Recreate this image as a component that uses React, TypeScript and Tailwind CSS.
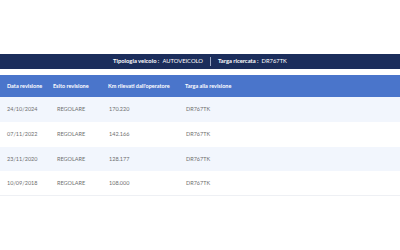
export default function App() {
  const rows = [
    ["24/10/2024", "REGOLARE", "170.220", "DR767TK"],
    ["07/11/2022", "REGOLARE", "142.166", "DR767TK"],
    ["23/11/2020", "REGOLARE", "128.177", "DR767TK"],
    ["10/09/2018", "REGOLARE", "108.000", "DR767TK"],
  ];
  return (
    <div className="w-[400px] h-[250px] bg-white pt-[54px] font-['Lato',sans-serif]">
      <div className="h-[15px] bg-[#1b2d5b] flex items-center justify-center text-white text-[5.8px]">
        <span className="font-bold">Tipologia veicolo :</span>
        <span className="ml-[3px]">AUTOVEICOLO</span>
        <span className="mx-[7px] w-px h-[9px] bg-[#9aa6c0]" />
        <span className="font-bold">Targa ricercata :</span>
        <span className="ml-[3px]">DR767TK</span>
      </div>
      <div className="mt-[6px] h-[22px] bg-[#4a75cb] flex items-center text-white text-[5.5px] font-bold">
        <div className="w-[53px] pl-[7px]">Data revisione</div>
        <div className="w-[55px]">Esito revisione</div>
        <div className="w-[77px]">Km rilevati dall'operatore</div>
        <div>Targa alla revisione</div>
      </div>
      {rows.map((r, i) => (
        <div
          key={i}
          className={`h-[24.75px] flex items-center text-[5.5px] text-[#6f6f6f] ${i % 2 === 0 ? "bg-[#f2f6fd]" : "bg-white"} ${i === 3 ? "border-b border-[#eef0f4]" : ""}`}
        >
          <div className="w-[57px] pl-[7px]">{r[0]}</div>
          <div className="w-[52px]">{r[1]}</div>
          <div className="w-[77px]">{r[2]}</div>
          <div>{r[3]}</div>
        </div>
      ))}
    </div>
  );
}
